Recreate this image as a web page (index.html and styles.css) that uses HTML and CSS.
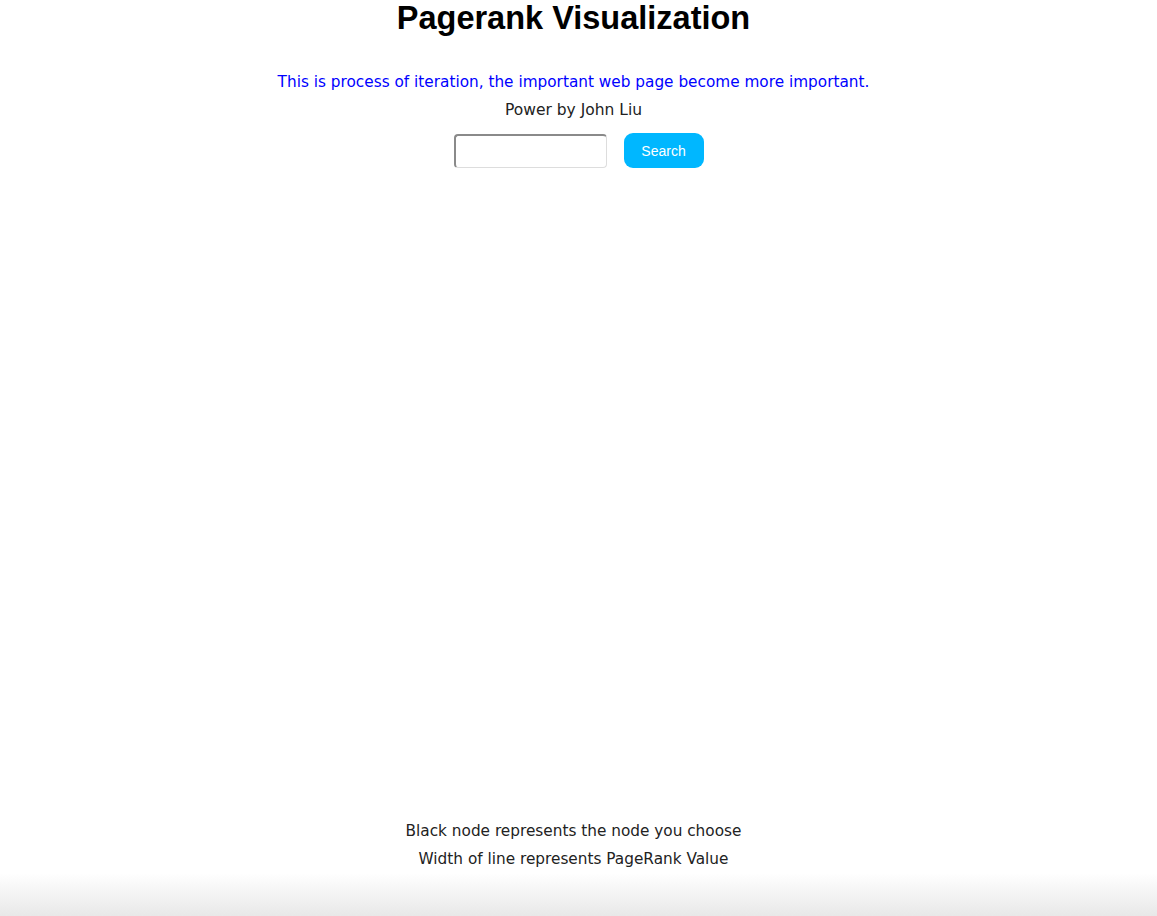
FILE: index.html
```html
<!DOCTYPE html>
<html>
<head>
<meta charset="utf-8">
<link rel="stylesheet" href="styles.css">
</head>
<body>
<div class="page">
  <h1 class="title">Pagerank Visualization</h1>
  <p class="intro">This is process of iteration, the important web page become more important.</p>
  <p class="author">Power by John Liu</p>
  <div class="search">
    <input class="search-input" type="text">
    <button class="search-btn">Search</button>
  </div>
  <div class="graph"></div>
  <div class="legend">
    <p class="legend-line">Black node represents the node you choose</p>
    <p class="legend-line">Width of line represents PageRank Value</p>
  </div>
  <div class="fade"></div>
</div>
</body>
</html>
```
FILE: styles.css
```css
html, body {
  margin: 0;
  padding: 0;
  background: #fff;
}
.page {
  width: 1157px;
  height: 916px;
  display: flex;
  flex-direction: column;
  align-items: center;
  font-family: "DejaVu Sans", "Liberation Sans", sans-serif;
  color: #222;
  overflow: hidden;
}
.title,
.intro,
.author,
.legend {
  margin-right: 10px;
}
.title {
  margin-top: 0;
  margin-bottom: 0;
  height: 36px;
  line-height: 36px;
  font-family: "Liberation Sans", Arial, sans-serif;
  font-size: 32.5px;
  font-weight: bold;
  color: #000;
}
.intro {
  margin-top: 36px;
  margin-bottom: 0;
  line-height: 20px;
  font-size: 15.3px;
  color: #0000ff;
}
.author {
  margin-top: 8px;
  margin-bottom: 0;
  line-height: 20px;
  font-size: 15.5px;
  color: #222;
}
.search {
  margin-top: 13px;
  display: flex;
  align-items: center;
  gap: 17px;
}
.search-input {
  box-sizing: border-box;
  width: 153px;
  height: 34px;
  border: 1px solid #ddd;
  border-top: 2px solid #8a8a8a;
  border-left: 2px solid #8a8a8a;
  border-radius: 4px;
  margin: 0;
  padding: 0 6px;
}
.search-btn {
  box-sizing: border-box;
  width: 80px;
  height: 35px;
  border: none;
  border-radius: 9px;
  background: #00b7ff;
  color: #fff;
  font-family: "Liberation Sans", Arial, sans-serif;
  font-size: 14px;
  padding: 0;
}
.graph {
  height: 649px;
  width: 100%;
}
.legend {
  display: flex;
  flex-direction: column;
  align-items: center;
}
.legend-line {
  margin: 0;
  line-height: 28px;
  font-size: 15.3px;
  color: #222;
}
.fade {
  width: 100%;
  flex: 1;
  background: linear-gradient(#fff, #e8e8e8);
}
```
